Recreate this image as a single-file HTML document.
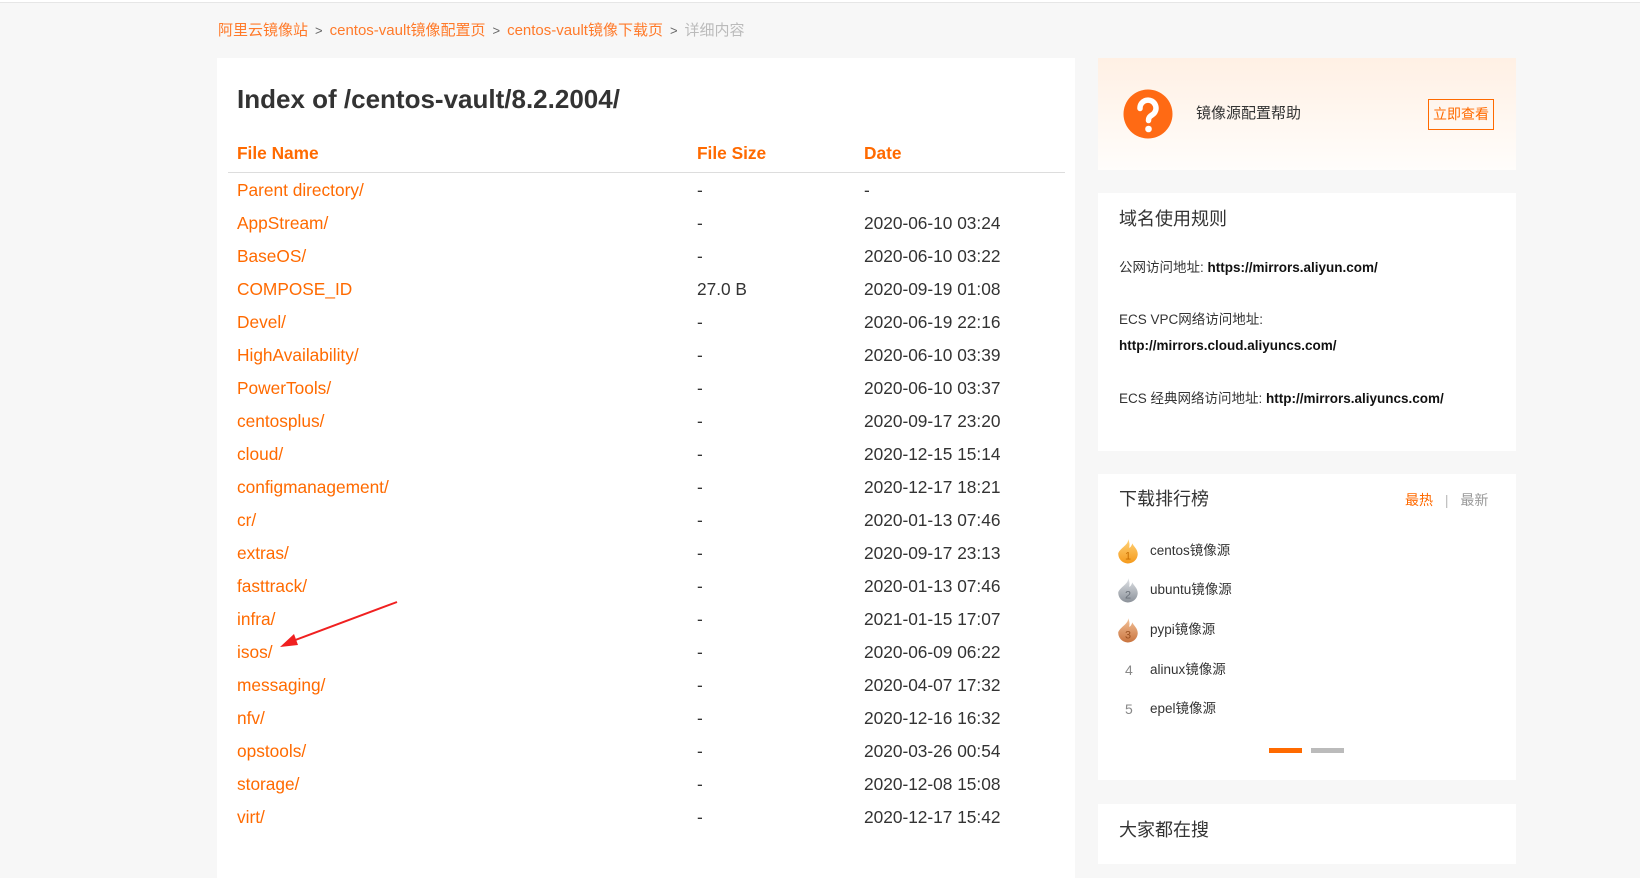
<!DOCTYPE html>
<html><head><meta charset="utf-8"><style>
*{margin:0;padding:0;box-sizing:border-box}
body{width:1640px;height:859px;background:#f7f7f7;font-family:"Liberation Sans","Noto Sans CJK SC",sans-serif;position:relative;overflow:hidden;color:#333}
.a{position:absolute;white-space:nowrap}
.topline{position:absolute;left:0;top:0;width:1640px;height:3px;border-bottom:1px solid #e6e6e6;background:#fff}
.card{position:absolute;background:#fff}
.o{color:#ff6a00}
.row{position:absolute;left:0;width:858px;height:33px;font-size:17.3px;line-height:33px}
.row span{position:absolute}
.ttl{font-size:18px;color:#333}
.s13{font-size:13.5px;color:#333}
.flame{position:absolute;width:22px;height:26px}
.gt{color:#666;font-size:13px;margin:0 7px}
</style></head><body>
<div class="topline"></div>
<div class="a" style="left:218px;top:20px;font-size:15px;line-height:22px;color:#ff7a2a">阿里云镜像站<span class="gt">&gt;</span>centos-vault镜像配置页<span class="gt">&gt;</span>centos-vault镜像下载页<span class="gt">&gt;</span><span style="color:#bbb">详细内容</span></div>

<div class="card" style="left:217px;top:58px;width:858px;height:820px">
<div class="a" style="left:20px;top:25px;font-size:26px;font-weight:bold;color:#333;line-height:32px">Index of /centos-vault/8.2.2004/</div>
<div class="row o" style="top:79px;font-weight:bold"><span style="left:20px">File Name</span><span style="left:480px">File Size</span><span style="left:647px">Date</span></div>
<div style="position:absolute;left:11px;top:114px;width:837px;height:1px;background:#ddd"></div>
<div class="row" style="top:116px"><span class="o" style="left:20px">Parent directory/</span><span style="left:480px">-</span><span style="left:647px">-</span></div>
<div class="row" style="top:149px"><span class="o" style="left:20px">AppStream/</span><span style="left:480px">-</span><span style="left:647px">2020-06-10 03:24</span></div>
<div class="row" style="top:182px"><span class="o" style="left:20px">BaseOS/</span><span style="left:480px">-</span><span style="left:647px">2020-06-10 03:22</span></div>
<div class="row" style="top:215px"><span class="o" style="left:20px">COMPOSE_ID</span><span style="left:480px">27.0 B</span><span style="left:647px">2020-09-19 01:08</span></div>
<div class="row" style="top:248px"><span class="o" style="left:20px">Devel/</span><span style="left:480px">-</span><span style="left:647px">2020-06-19 22:16</span></div>
<div class="row" style="top:281px"><span class="o" style="left:20px">HighAvailability/</span><span style="left:480px">-</span><span style="left:647px">2020-06-10 03:39</span></div>
<div class="row" style="top:314px"><span class="o" style="left:20px">PowerTools/</span><span style="left:480px">-</span><span style="left:647px">2020-06-10 03:37</span></div>
<div class="row" style="top:347px"><span class="o" style="left:20px">centosplus/</span><span style="left:480px">-</span><span style="left:647px">2020-09-17 23:20</span></div>
<div class="row" style="top:380px"><span class="o" style="left:20px">cloud/</span><span style="left:480px">-</span><span style="left:647px">2020-12-15 15:14</span></div>
<div class="row" style="top:413px"><span class="o" style="left:20px">configmanagement/</span><span style="left:480px">-</span><span style="left:647px">2020-12-17 18:21</span></div>
<div class="row" style="top:446px"><span class="o" style="left:20px">cr/</span><span style="left:480px">-</span><span style="left:647px">2020-01-13 07:46</span></div>
<div class="row" style="top:479px"><span class="o" style="left:20px">extras/</span><span style="left:480px">-</span><span style="left:647px">2020-09-17 23:13</span></div>
<div class="row" style="top:512px"><span class="o" style="left:20px">fasttrack/</span><span style="left:480px">-</span><span style="left:647px">2020-01-13 07:46</span></div>
<div class="row" style="top:545px"><span class="o" style="left:20px">infra/</span><span style="left:480px">-</span><span style="left:647px">2021-01-15 17:07</span></div>
<div class="row" style="top:578px"><span class="o" style="left:20px">isos/</span><span style="left:480px">-</span><span style="left:647px">2020-06-09 06:22</span></div>
<div class="row" style="top:611px"><span class="o" style="left:20px">messaging/</span><span style="left:480px">-</span><span style="left:647px">2020-04-07 17:32</span></div>
<div class="row" style="top:644px"><span class="o" style="left:20px">nfv/</span><span style="left:480px">-</span><span style="left:647px">2020-12-16 16:32</span></div>
<div class="row" style="top:677px"><span class="o" style="left:20px">opstools/</span><span style="left:480px">-</span><span style="left:647px">2020-03-26 00:54</span></div>
<div class="row" style="top:710px"><span class="o" style="left:20px">storage/</span><span style="left:480px">-</span><span style="left:647px">2020-12-08 15:08</span></div>
<div class="row" style="top:743px"><span class="o" style="left:20px">virt/</span><span style="left:480px">-</span><span style="left:647px">2020-12-17 15:42</span></div>
</div>
<svg style="position:absolute;left:0;top:0" width="1640" height="859"><line x1="397" y1="602" x2="290" y2="642" stroke="#f02020" stroke-width="2"/><polygon points="280,647 294,634 298,645" fill="#f02020"/></svg>

<div class="card" style="left:1098px;top:58px;width:418px;height:112px;background:linear-gradient(#fff0e4,#fffdfb)">
<svg class="a" style="left:25px;top:31px" width="50" height="50"><circle cx="25" cy="25" r="24.5" fill="#ff6a14"/><path d="M17 19.5a8 8 0 1 1 12 6.5c-2.5 1.6-3.5 2.6-3.5 5.5" fill="none" stroke="#fff" stroke-width="5.5" stroke-linecap="round"/><circle cx="25.5" cy="40" r="3.3" fill="#fff"/></svg>
<div class="a" style="left:98px;top:46px;font-size:15px;line-height:20px">镜像源配置帮助</div>
<div class="a o" style="left:330px;top:41px;width:66px;height:31px;border:1px solid #ff6a00;font-size:14px;line-height:29px;text-align:center">立即查看</div>
</div>

<div class="card" style="left:1098px;top:193px;width:418px;height:258px">
<div class="a ttl" style="left:21px;top:14px;line-height:24px">域名使用规则</div>
<div class="a s13" style="left:21px;top:66px;line-height:18px">公网访问地址: <b style="color:#111">https://mirrors.aliyun.com/</b></div>
<div class="a s13" style="left:21px;top:118px;line-height:18px">ECS VPC网络访问地址:</div>
<div class="a s13" style="left:21px;top:144px;line-height:18px"><b style="color:#111">http://mirrors.cloud.aliyuncs.com/</b></div>
<div class="a s13" style="left:21px;top:197px;line-height:18px">ECS 经典网络访问地址: <b style="color:#111">http://mirrors.aliyuncs.com/</b></div>
</div>

<div class="card" style="left:1098px;top:474px;width:418px;height:306px">
<div class="a ttl" style="left:21px;top:13px;line-height:24px">下载排行榜</div>
<div class="a" style="left:307px;top:16px;font-size:14px;line-height:20px"><span class="o">最热</span> <span style="color:#bbb;margin:0 8px">|</span> <span style="color:#999">最新</span></div>
<svg class="flame" style="left:19px;top:64px" viewBox="0 0 20 24"><defs><linearGradient id="g1" x1="0" y1="0" x2="0" y2="1"><stop offset="0" stop-color="#ffd37a"/><stop offset="1" stop-color="#f59a1c"/></linearGradient></defs><path d="M10 1C11 6 3 9 1 14a9 9 0 0 0 18 1C19 10 15 8 14 5 13 8 12 9 11 9 12 6 11 3 10 1z" fill="url(#g1)"/><text x="10" y="20" font-size="10" text-anchor="middle" fill="#c76d00" font-family="Liberation Sans">1</text></svg>
<svg class="flame" style="left:19px;top:103px" viewBox="0 0 20 24"><defs><linearGradient id="g2" x1="0" y1="0" x2="0" y2="1"><stop offset="0" stop-color="#dfe2e6"/><stop offset="1" stop-color="#8c929a"/></linearGradient></defs><path d="M10 1C11 6 3 9 1 14a9 9 0 0 0 18 1C19 10 15 8 14 5 13 8 12 9 11 9 12 6 11 3 10 1z" fill="url(#g2)"/><text x="10" y="20" font-size="10" text-anchor="middle" fill="#6a7078" font-family="Liberation Sans">2</text></svg>
<svg class="flame" style="left:19px;top:143px" viewBox="0 0 20 24"><defs><linearGradient id="g3" x1="0" y1="0" x2="0" y2="1"><stop offset="0" stop-color="#f4c39a"/><stop offset="1" stop-color="#c9743f"/></linearGradient></defs><path d="M10 1C11 6 3 9 1 14a9 9 0 0 0 18 1C19 10 15 8 14 5 13 8 12 9 11 9 12 6 11 3 10 1z" fill="url(#g3)"/><text x="10" y="20" font-size="10" text-anchor="middle" fill="#9a5020" font-family="Liberation Sans">3</text></svg>
<div class="a" style="left:52px;top:67px;font-size:13.5px;line-height:20px">centos镜像源</div>
<div class="a" style="left:52px;top:106px;font-size:13.5px;line-height:20px">ubuntu镜像源</div>
<div class="a" style="left:52px;top:146px;font-size:13.5px;line-height:20px">pypi镜像源</div>
<div class="a" style="left:27px;top:186px;font-size:14px;line-height:20px;color:#888">4</div>
<div class="a" style="left:52px;top:186px;font-size:13.5px;line-height:20px">alinux镜像源</div>
<div class="a" style="left:27px;top:225px;font-size:14px;line-height:20px;color:#888">5</div>
<div class="a" style="left:52px;top:225px;font-size:13.5px;line-height:20px">epel镜像源</div>
<div class="a" style="left:171px;top:274px;width:33px;height:5px;background:#ff6a00"></div>
<div class="a" style="left:213px;top:274px;width:33px;height:5px;background:#bbb"></div>
</div>

<div class="card" style="left:1098px;top:804px;width:418px;height:60px">
<div class="a ttl" style="left:21px;top:14px;line-height:24px">大家都在搜</div>
</div>
</body></html>
